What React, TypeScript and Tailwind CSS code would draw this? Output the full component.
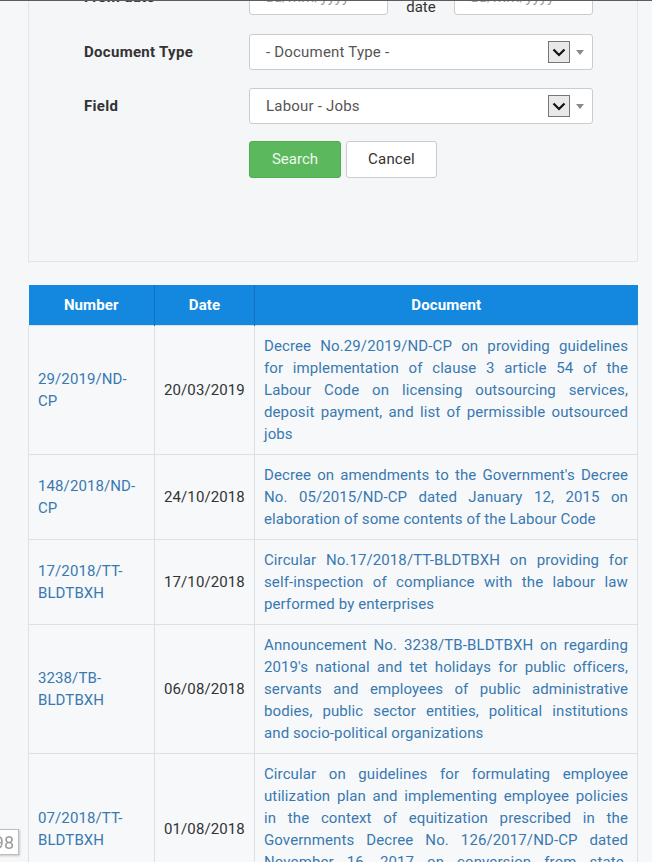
import React from 'react'

type Doc = {
  number: string
  date: string
  lines: string[]
}

// titles are kept line by line so the justified wrapping matches the site
const docs: Doc[] = [
  {
    number: '29/2019/ND-CP',
    date: '20/03/2019',
    lines: [
      'Decree No.29/2019/ND-CP on providing guidelines',
      'for implementation of clause 3 article 54 of the',
      'Labour Code on licensing outsourcing services,',
      'deposit payment, and list of permissible outsourced',
      'jobs',
    ],
  },
  {
    number: '148/2018/ND-CP',
    date: '24/10/2018',
    lines: [
      "Decree on amendments to the Government's Decree",
      'No. 05/2015/ND-CP dated January 12, 2015 on',
      'elaboration of some contents of the Labour Code',
    ],
  },
  {
    number: '17/2018/TT-BLDTBXH',
    date: '17/10/2018',
    lines: [
      'Circular No.17/2018/TT-BLDTBXH on providing for',
      'self-inspection of compliance with the labour law',
      'performed by enterprises',
    ],
  },
  {
    number: '3238/TB-BLDTBXH',
    date: '06/08/2018',
    lines: [
      'Announcement No. 3238/TB-BLDTBXH on regarding',
      "2019's national and tet holidays for public officers,",
      'servants and employees of public administrative',
      'bodies, public sector entities, political institutions',
      'and socio-political organizations',
    ],
  },
  {
    number: '07/2018/TT-BLDTBXH',
    date: '01/08/2018',
    lines: [
      'Circular on guidelines for formulating employee',
      'utilization plan and implementing employee policies',
      'in the context of equitization prescribed in the',
      'Governments Decree No. 126/2017/ND-CP dated',
      'November 16, 2017 on conversion from state-',
      'owned enterprises into joint-stock companies',
    ],
  },
]

function FakeSelect({ value }: { value: string }) {
  return (
    <div className="flex h-[36px] w-[344px] items-center rounded-[3px] border border-[#cccccc] bg-white pl-[16px] pr-[8px]">
      <span className="flex-1 tracking-[0.2px] text-[#555]">{value}</span>
      <span className="flex h-[22px] w-[22px] items-center justify-center border border-[#767676] bg-[#e9e9e9]">
        <svg width="14" height="9" viewBox="0 0 14 9" fill="none">
          <path d="M1.5 1.5 L7 7 L12.5 1.5" stroke="#111" strokeWidth="2.2" />
        </svg>
      </span>
      <span className="ml-[6px] h-0 w-0 border-x-[4px] border-t-[5px] border-x-transparent border-t-[#8a8a8a]" />
    </div>
  )
}

export default function App() {
  return (
    <div className="min-h-screen overflow-hidden bg-[#f6f7f9] font-['Roboto',sans-serif] text-[15px] text-[#333]">
      <div className="fixed inset-x-0 top-0 z-10 h-px bg-[#5c5c5c]" />

      {/* search panel */}
      <div className="-mt-[59px] ml-[28px] mr-[14px] border border-[#e3e6e9] bg-[#f5f6f8] pb-[83px] pl-[55px] pt-[34px]">
        <div className="mb-[16px] flex h-[42px] items-center">
          <label className="w-[165px] font-bold tracking-[0.3px]">From date</label>
          <input
            className="h-[36px] w-[139px] rounded-[3px] border border-[#cccccc] bg-white px-[15px] text-[#555] placeholder:text-[#999]"
            placeholder="dd/mm/yyyy"
          />
          <span className="w-[66px] text-center leading-[21px]">
            To
            <br />
            date
          </span>
          <input
            className="h-[36px] w-[139px] rounded-[3px] border border-[#cccccc] bg-white px-[15px] text-[#555] placeholder:text-[#999]"
            placeholder="dd/mm/yyyy"
          />
        </div>

        <div className="mb-[18px] flex items-center">
          <label className="w-[165px] font-bold tracking-[0.3px]">Document Type</label>
          <FakeSelect value="- Document Type -" />
        </div>

        <div className="mb-[17px] flex items-center">
          <label className="w-[165px] font-bold tracking-[0.3px]">Field</label>
          <FakeSelect value="Labour - Jobs" />
        </div>

        <div className="flex gap-[5px] pl-[165px]">
          <button className="h-[37px] w-[92px] rounded-[3px] border border-[#4cae4c] bg-[#5cb85c] text-[#eef8ee]">
            Search
          </button>
          <button className="h-[37px] w-[91px] rounded-[3px] border border-[#cccccc] bg-white tracking-[0.2px] text-[#333]">
            Cancel
          </button>
        </div>
      </div>

      {/* results */}
      <table className="ml-[28px] mt-[23px] w-[610px] table-fixed border-collapse tracking-[0.1px]">
        <colgroup>
          <col className="w-[126px]" />
          <col className="w-[100px]" />
          <col />
        </colgroup>
        <thead>
          <tr className="bg-[#1488de] text-white">
            <th className="border-r border-[#0f72bd] py-[9px] font-bold leading-[22px]">Number</th>
            <th className="border-r border-[#0f72bd] py-[9px] font-bold leading-[22px]">Date</th>
            <th className="py-[9px] font-bold leading-[22px]">Document</th>
          </tr>
        </thead>
        <tbody>
          {docs.map((d) => (
            <tr key={d.number} className="bg-[#f6f8fa]">
              <td className="border border-[#dde1e5] pb-[9px] pl-[9px] pr-[10px] pt-[9px] align-middle leading-[22px] text-[#3a78b0]">
                {d.number}
              </td>
              <td className="border border-[#dde1e5] pb-[9px] pl-[9px] pr-[8px] pt-[9px] align-middle leading-[22px]">
                {d.date}
              </td>
              <td className="border border-[#dde1e5] pb-[9px] pl-[9px] pr-[9px] pt-[9px] align-middle leading-[22px] text-[#3a78b0]">
                {d.lines.map((line, i) =>
                  i < d.lines.length - 1 ? (
                    <span key={i} className="block text-justify [text-align-last:justify]">
                      {line}
                    </span>
                  ) : (
                    <span key={i} className="block">
                      {line}
                    </span>
                  ),
                )}
              </td>
            </tr>
          ))}
        </tbody>
      </table>

      <div className="fixed left-[-14px] top-[829px] flex h-[26px] w-[33px] items-center justify-end border border-[#bdbdbd] bg-white pr-[4px] text-[18px] text-[#9a9a9a] shadow-[1px_1px_2px_rgba(0,0,0,0.2)]">
        98
      </div>
    </div>
  )
}
